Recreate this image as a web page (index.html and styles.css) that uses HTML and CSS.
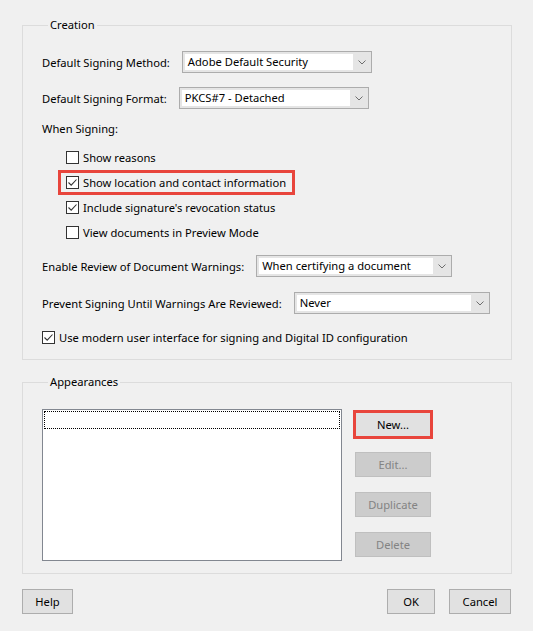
FILE: index.html
```html
<!DOCTYPE html>
<html lang="en">
<head>
  <meta charset="UTF-8" />
  <meta name="viewport" content="width=device-width, initial-scale=1.0" />
  <title>Signing Preferences</title>
  <link rel="stylesheet" href="styles.css">
</head>
<body>
  <div class="dialog">
    <fieldset class="group creation">
      <legend>Creation</legend>

      <div class="field-row">
        <span class="label">Default Signing Method:</span>
        <div class="combo combo-short">
          <span class="combo-value">Adobe Default Security</span>
          <span class="combo-arrow"><svg width="8" height="5" viewBox="0 0 8 5"><path d="M0.5 0.5 L4 4 L7.5 0.5" fill="none" stroke="#6d6d6d" stroke-width="1"/></svg></span>
        </div>
      </div>

      <div class="field-row">
        <span class="label">Default Signing Format:</span>
        <div class="combo combo-short">
          <span class="combo-value">PKCS#7 - Detached</span>
          <span class="combo-arrow"><svg width="8" height="5" viewBox="0 0 8 5"><path d="M0.5 0.5 L4 4 L7.5 0.5" fill="none" stroke="#6d6d6d" stroke-width="1"/></svg></span>
        </div>
      </div>

      <div class="section-label">When Signing:</div>

      <div class="check-list">
        <label class="check-row"><span class="cb"></span>Show reasons</label>
        <label class="check-row highlight"><span class="cb"><svg width="11" height="11" viewBox="0 0 11 11"><path d="M1.5 5.5 L4.2 8.2 L9.5 2.5" fill="none" stroke="#333" stroke-width="1.1"/></svg></span>Show location and contact information</label>
        <label class="check-row"><span class="cb"><svg width="11" height="11" viewBox="0 0 11 11"><path d="M1.5 5.5 L4.2 8.2 L9.5 2.5" fill="none" stroke="#333" stroke-width="1.1"/></svg></span>Include signature's revocation status</label>
        <label class="check-row"><span class="cb"></span>View documents in Preview Mode</label>
      </div>

      <div class="field-row review-row">
        <span class="label">Enable Review of Document Warnings:</span>
        <div class="combo combo-long">
          <span class="combo-value">When certifying a document</span>
          <span class="combo-arrow"><svg width="8" height="5" viewBox="0 0 8 5"><path d="M0.5 0.5 L4 4 L7.5 0.5" fill="none" stroke="#6d6d6d" stroke-width="1"/></svg></span>
        </div>
      </div>

      <div class="field-row prevent-row">
        <span class="label">Prevent Signing Until Warnings Are Reviewed:</span>
        <div class="combo combo-long">
          <span class="combo-value">Never</span>
          <span class="combo-arrow"><svg width="8" height="5" viewBox="0 0 8 5"><path d="M0.5 0.5 L4 4 L7.5 0.5" fill="none" stroke="#6d6d6d" stroke-width="1"/></svg></span>
        </div>
      </div>

      <label class="check-row modern-row"><span class="cb"><svg width="11" height="11" viewBox="0 0 11 11"><path d="M1.5 5.5 L4.2 8.2 L9.5 2.5" fill="none" stroke="#333" stroke-width="1.1"/></svg></span>Use modern user interface for signing and Digital ID configuration</label>
    </fieldset>

    <fieldset class="group appearances">
      <legend>Appearances</legend>
      <div class="appearance-body">
        <div class="list-box">
          <div class="list-focus"></div>
        </div>
        <div class="side-buttons">
          <button class="btn highlight">New...</button>
          <button class="btn" disabled>Edit...</button>
          <button class="btn" disabled>Duplicate</button>
          <button class="btn" disabled>Delete</button>
        </div>
      </div>
    </fieldset>

    <div class="footer">
      <button class="btn btn-help">Help</button>
      <div class="footer-right">
        <button class="btn btn-ok">OK</button>
        <button class="btn btn-cancel">Cancel</button>
      </div>
    </div>
  </div>
</body>
</html>
```

FILE: styles.css
```css
:root {
  --bg: #f0f0f0;
  --text: #000;
  --group-border: #dcdcdc;
  --control-border: #adadad;
  --button-bg: #e1e1e1;
  --disabled-bg: #cccccc;
  --disabled-border: #bfbfbf;
  --disabled-text: #838383;
  --mark: #e8453c;
}
* {
  box-sizing: border-box;
}
body {
  margin: 0;
  background: var(--bg);
  color: var(--text);
  font-family: "Noto Sans", "Open Sans", sans-serif;
  font-size: 11.2px;
  line-height: 15px;
}
.dialog {
  padding: 18px 21px 0 22px;
}
.group {
  margin: 0;
  min-width: 0;
  border: 1px solid var(--group-border);
  padding: 0 19px;
}
.group legend {
  margin-left: 6px;
  padding: 0 2px;
  line-height: 14px;
}
.creation {
  padding-top: 19px;
  padding-bottom: 9px;
}
.field-row {
  display: flex;
  align-items: center;
  gap: 12px;
  height: 22px;
  margin-bottom: 14px;
}
.label {
  white-space: nowrap;
  flex-shrink: 0;
}
.combo {
  display: flex;
  height: 22px;
  padding: 2px 0 2px 2px;
  background: #e5e5e5;
  border: 1px solid #acacac;
}
.combo-short {
  width: 190px;
}
.combo-long {
  width: 196px;
}
.combo-value {
  flex: 1;
  background: #fff;
  padding-left: 3px;
  line-height: 16px;
  white-space: nowrap;
}
.combo-arrow {
  width: 18px;
  display: flex;
  align-items: center;
  justify-content: center;
}
.section-label {
  height: 16px;
  line-height: 16px;
  margin-top: -2px;
}
.check-list {
  margin-top: 8px;
  padding-left: 24px;
}
.check-row {
  display: flex;
  align-items: center;
  width: fit-content;
  height: 25px;
  padding-right: 6px;
  white-space: nowrap;
}
.check-row.highlight {
  margin-left: -8px;
  padding-left: 5px;
  border: 3px solid var(--mark);
}
.cb {
  width: 13px;
  height: 13px;
  margin-right: 4px;
  flex-shrink: 0;
  display: flex;
  align-items: center;
  justify-content: center;
  background: #fff;
  border: 1px solid #333;
}
.review-row {
  margin-top: 10px;
  margin-bottom: 15px;
}
.prevent-row {
  margin-bottom: 11px;
}
.modern-row {
  height: 25px;
}
.appearances {
  margin-top: 15px;
  padding-top: 20px;
  padding-bottom: 12px;
}
.appearance-body {
  display: flex;
  gap: 13px;
}
.list-box {
  width: 300px;
  height: 152px;
  background: #fff;
  border: 1px solid #828790;
  padding: 1px;
}
.list-focus {
  height: 18px;
  border: 1px dotted #000;
}
.side-buttons {
  display: flex;
  flex-direction: column;
  gap: 15px;
  padding-top: 3px;
}
.btn {
  height: 25px;
  width: 76px;
  padding: 0;
  font: inherit;
  color: var(--text);
  background: var(--button-bg);
  border: 1px solid var(--control-border);
}
.btn.highlight {
  outline: 3px solid var(--mark);
  outline-offset: -1px;
}
.btn:disabled {
  background: var(--disabled-bg);
  border-color: var(--disabled-border);
  color: var(--disabled-text);
}
.footer {
  display: flex;
  justify-content: space-between;
  margin-top: 15px;
}
.footer-right {
  display: flex;
  gap: 14px;
  padding-right: 1px;
}
.btn-help {
  width: 51px;
}
.btn-ok {
  width: 48px;
}
.btn-cancel {
  width: 62px;
}
```
